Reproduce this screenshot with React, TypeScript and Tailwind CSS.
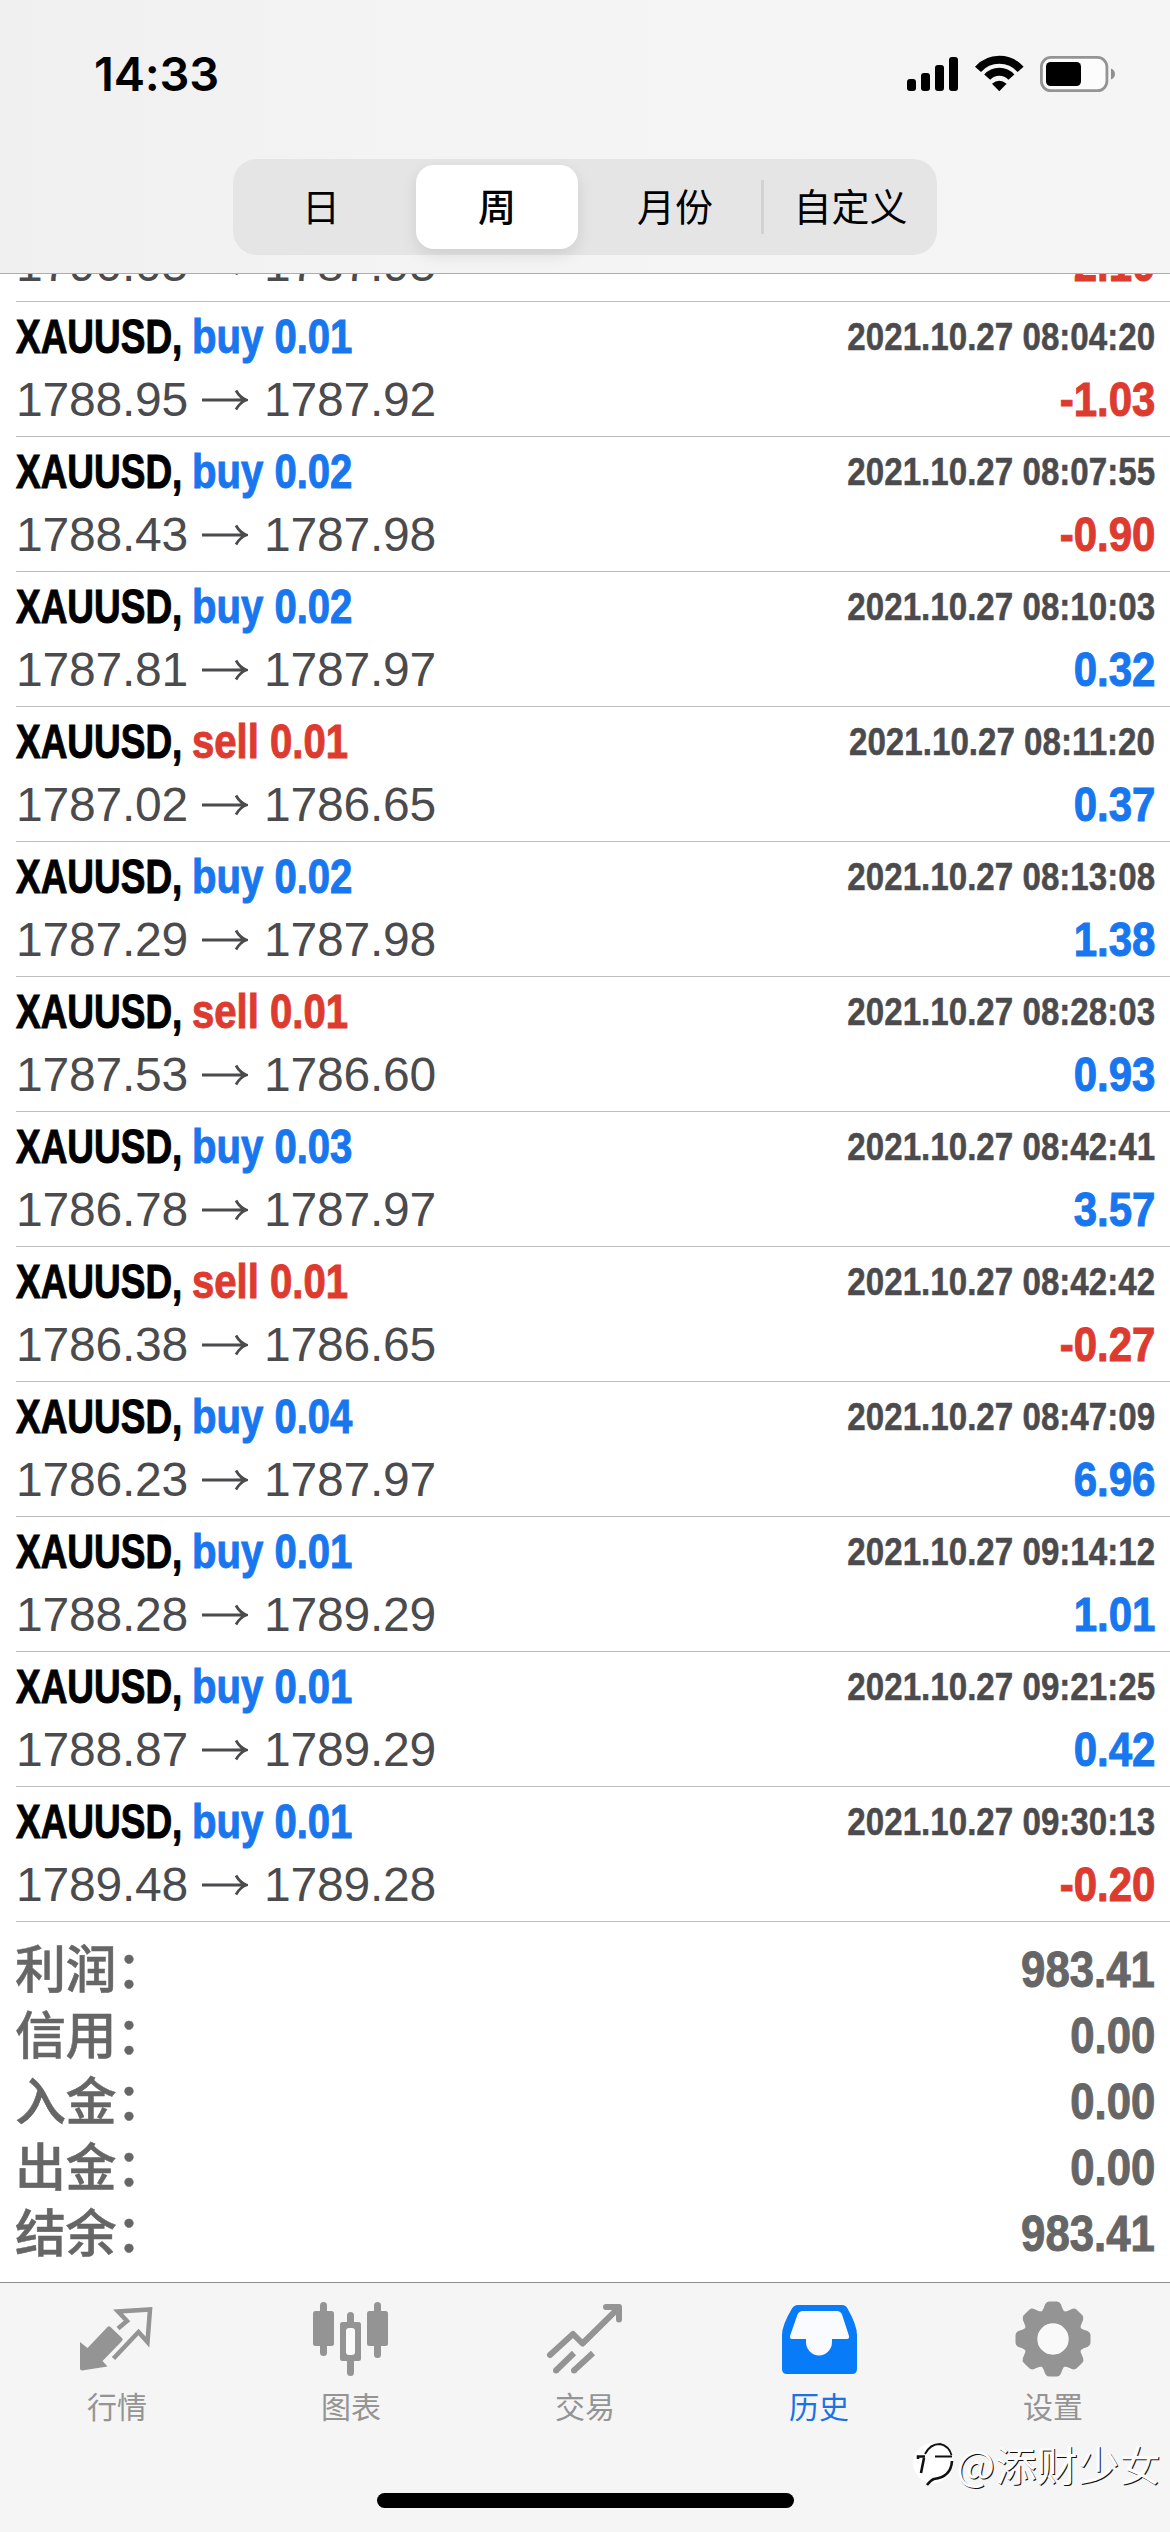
import type { ReactNode } from "react";

type Side = "buy" | "sell";
type Quote = { from: string; to: string; profit: string };
type Deal = Quote & { side: Side; lots: string; time: string };

const scrolledDeal: Quote = { from: "1790.05", to: "1787.95", profit: "-2.10" };

const deals: Deal[] = [
  { side: "buy", lots: "0.01", from: "1788.95", to: "1787.92", time: "2021.10.27 08:04:20", profit: "-1.03" },
  { side: "buy", lots: "0.02", from: "1788.43", to: "1787.98", time: "2021.10.27 08:07:55", profit: "-0.90" },
  { side: "buy", lots: "0.02", from: "1787.81", to: "1787.97", time: "2021.10.27 08:10:03", profit: "0.32" },
  { side: "sell", lots: "0.01", from: "1787.02", to: "1786.65", time: "2021.10.27 08:11:20", profit: "0.37" },
  { side: "buy", lots: "0.02", from: "1787.29", to: "1787.98", time: "2021.10.27 08:13:08", profit: "1.38" },
  { side: "sell", lots: "0.01", from: "1787.53", to: "1786.60", time: "2021.10.27 08:28:03", profit: "0.93" },
  { side: "buy", lots: "0.03", from: "1786.78", to: "1787.97", time: "2021.10.27 08:42:41", profit: "3.57" },
  { side: "sell", lots: "0.01", from: "1786.38", to: "1786.65", time: "2021.10.27 08:42:42", profit: "-0.27" },
  { side: "buy", lots: "0.04", from: "1786.23", to: "1787.97", time: "2021.10.27 08:47:09", profit: "6.96" },
  { side: "buy", lots: "0.01", from: "1788.28", to: "1789.29", time: "2021.10.27 09:14:12", profit: "1.01" },
  { side: "buy", lots: "0.01", from: "1788.87", to: "1789.29", time: "2021.10.27 09:21:25", profit: "0.42" },
  { side: "buy", lots: "0.01", from: "1789.48", to: "1789.28", time: "2021.10.27 09:30:13", profit: "-0.20" },
];

const totals = [
  { label: "利润：", value: "983.41" },
  { label: "信用：", value: "0.00" },
  { label: "入金：", value: "0.00" },
  { label: "出金：", value: "0.00" },
  { label: "结余：", value: "983.41" },
];

function StatusBar() {
  return (
    <div className="flex h-[159px] items-start justify-between pl-[94px] pr-[53px] pt-[42px]">
      <div className="font-['Inter'] text-[47px] font-semibold leading-[64px] tracking-[-0.2px] text-black">14:33</div>
      <svg className="mt-[10px] h-[42px] w-[212px]" viewBox="905 52 212 42">
        <rect x="907" y="79" width="9" height="12" rx="3" />
        <rect x="921" y="73" width="9" height="18" rx="3" />
        <rect x="935" y="65" width="9" height="26" rx="3" />
        <rect x="949" y="57" width="9" height="34" rx="3" />
        <g fill="none" stroke="#000" strokeWidth="8">
          <path d="M978 69.400A28.500 28.500 0 0 1 1020.600 69.400" />
          <path d="M987.200 77.200A16.200 16.200 0 0 1 1011.400 77.200" />
        </g>
        <path d="M992 83.800Q999.300 77.800 1006.600 83.800L999.300 91.200z" />
        <rect x="1041.400" y="57.400" width="65.500" height="33.300" rx="9.500" fill="#fcfcfc" stroke="#949494" strokeWidth="2.800" />
        <rect x="1046" y="62" width="35" height="24" rx="4.500" />
        <path d="M1111 68.500c5.300 1.800 5.300 9.200 0 11z" fill="#8f8f8f" />
      </svg>
    </div>
  );
}

function PeriodTabs() {
  return (
    <div className="mx-auto grid h-[96px] w-[704px] grid-cols-4 rounded-[24px] bg-[#e5e5e6] font-['Noto_Sans_CJK_SC',sans-serif] text-[38px] leading-[91px] text-black">
      <div className="text-center">日</div>
      <div className="px-[7px] py-[6px]">
        <div className="h-[84px] rounded-[18px] bg-white text-center font-medium leading-[79px] shadow-[0_6px_16px_rgba(0,0,0,0.10)]">周</div>
      </div>
      <div className="pl-1 text-center">月份</div>
      <div className="flex">
        <div className="mt-[21px] h-[54px] w-[3px] bg-[#d2d2d4]" />
        <div className="flex-1 text-center">自定义</div>
      </div>
    </div>
  );
}

function Arrow() {
  return (
    <svg className="h-[24px] w-[46px]" viewBox="0 0 46 24" fill="none" stroke="#4b4b4e" strokeWidth="2.800">
      <path d="M0 12H44M34 2.500C36.500 7 40 10.500 44.500 12C40 13.500 36.500 17 34 21.500" />
    </svg>
  );
}

function QuoteLine({ quote }: { quote: Quote }) {
  const gain = quote.profit.startsWith("-") ? "text-[#dd3b30]" : "text-[#1877ee]";
  return (
    <div className="flex h-[64px] shrink-0 items-center justify-between text-[48px] leading-[64px]">
      <div className="flex items-center text-[#4b4b4e]">
        <span className="w-[186px] tracking-[-0.2px]">{quote.from}</span>
        <Arrow />
        <span className="ml-4 tracking-[-0.2px]">{quote.to}</span>
      </div>
      <div className={`origin-right scale-x-[0.875] font-bold [-webkit-text-stroke:1px_currentColor] ${gain}`}>{quote.profit}</div>
    </div>
  );
}

function DealRow({ deal }: { deal: Deal }) {
  const action = deal.side === "buy" ? "text-[#1877ee]" : "text-[#dd3b30]";
  return (
    <div className="ml-4 flex h-[135px] shrink-0 flex-col border-b border-[#bdbdc0] pr-[15px] pt-[5px]">
      <div className="flex h-[61px] items-start justify-between whitespace-nowrap font-bold">
        <div className="flex text-[48px] leading-[60px] [-webkit-text-stroke:1px_currentColor]">
          <div className="w-[176px] origin-left scale-x-[0.77] text-black">XAUUSD,</div>
          <div className={`origin-left scale-x-[0.835] ${action}`}>
            {deal.side} {deal.lots}
          </div>
        </div>
        <div className="origin-right scale-x-[0.85] text-[39px] leading-[59px] text-[#4b4b4e] [-webkit-text-stroke:0.5px_currentColor]">{deal.time}</div>
      </div>
      <QuoteLine quote={deal} />
    </div>
  );
}

function QuotesIcon() {
  return (
    <svg className="h-[80px] w-[80px]" viewBox="77 2300 80 80">
      <path d="M80 2342l7.500 6L107.500 2327q1.500-1.500 3 0L122 2338q1.500 1.500 0 3L102.500 2361l5 5.500L82 2370.500q-2 0-2-2z" fill="#949494" />
      <path d="M118 2328.500l9-7.500l-9-9.500L150 2309.500L147.500 2342l-9-10L113.500 2358.500" fill="none" stroke="#949494" strokeWidth="4.500" />
    </svg>
  );
}

function ChartIcon() {
  return (
    <svg className="h-[80px] w-[80px]" viewBox="311 2300 80 80" fill="#949494">
      <rect x="320" y="2302" width="7" height="54" rx="3.500" />
      <rect x="313" y="2311" width="21" height="35" rx="2.500" />
      <rect x="374" y="2302" width="7" height="56" rx="3.500" />
      <rect x="367" y="2311" width="21" height="35" rx="2.500" />
      <rect x="347" y="2312" width="7" height="64" rx="3.500" />
      <rect x="340" y="2322" width="21" height="39" rx="2.500" />
      <rect x="346" y="2328" width="9" height="27" rx="3" fill="#fafafa" />
    </svg>
  );
}

function TradeIcon() {
  return (
    <svg className="h-[80px] w-[80px]" viewBox="545 2300 80 80" fill="none" stroke="#949494" strokeWidth="6" strokeLinejoin="round">
      <path d="M550 2355L573 2334L582.500 2343.500L618 2308.500" strokeLinecap="round" />
      <path d="M606 2307H619V2319.500" strokeLinecap="round" />
      <path d="M574 2353L556 2370.500M593 2353L574 2370.500" />
      <g fill="#949494" stroke="none">
        <circle cx="556" cy="2370.500" r="3" />
        <circle cx="574" cy="2370.500" r="3" />
      </g>
    </svg>
  );
}

function HistoryIcon() {
  return (
    <svg className="h-[80px] w-[80px]" viewBox="778 2300 80 80">
      <path d="M797 2305H841q4 0 5.500 3.500Q856 2325 856 2335V2369q0 5-5 5H786q-5 0-5-5V2335Q781 2325 791 2308.500q2-3.500 6-3.500z" fill="#087cf8" />
      <path d="M802 2311H836q3.500 0 5 3.500L848 2336q.500 3-2 3H831V2342a12.500 13 0 0 1-26 0V2339H791q-2.500 0-2-3L796.500 2314.500q1.500-3.500 5.500-3.500z" fill="#f9fbfe" />
    </svg>
  );
}

function SettingsIcon() {
  const angles = [0, 45, 90, 135, 180, 225, 270, 315];
  return (
    <svg className="h-[80px] w-[80px]" viewBox="-40 -39 80 80" fill="#949494">
      {angles.map((a) => (
        <path key={a} transform={`rotate(${a})`} d="M-13 -26Q-10 -28 -8.500 -33L-8 -34.500Q-6.500 -37.500 -4 -37.500H4Q6.500 -37.500 8 -34.500L8.500 -33Q10 -28 13 -26L8 -15H-8z" />
      ))}
      <circle r="22" fill="none" stroke="#949494" strokeWidth="13" />
      <circle r="15.700" fill="#f9f9f9" />
    </svg>
  );
}

function TabItem({ icon, label, active = false }: { icon: ReactNode; label: string; active?: boolean }) {
  return (
    <div className={`flex flex-col items-center pt-[17px] font-['Noto_Sans_CJK_SC',sans-serif] text-[30px] leading-[40px] ${active ? "text-[#1b72e6]" : "text-[#949494]"}`}>
      {icon}
      <span className="mt-[5px]">{label}</span>
    </div>
  );
}

function Watermark() {
  return (
    <div className="absolute bottom-[43px] right-[9px] flex items-center">
      <svg className="h-[52px] w-[44px]" viewBox="910 2444 44 52" fill="none" stroke="#111">
        <circle cx="931" cy="2470" r="20" fill="#fff" stroke="none" />
        <path strokeWidth="1.800" d="M923 2461Q928 2451 938 2451Q947 2453 949.500 2462M933 2463.500H950" />
        <path strokeWidth="2.600" d="M916 2466V2463.500H923M922 2465L919 2480M950 2468Q949 2484 932 2486Q929 2487 925 2492" />
      </svg>
      <div className="font-['Noto_Sans_CJK_SC',sans-serif] text-[41px] leading-[52px] tracking-[0.4px] text-[#fdfdfd] [text-shadow:1px_1px_0.5px_#111]">@添财少女</div>
    </div>
  );
}

export default function App() {
  return (
    <div className="relative flex h-[2532px] w-[1170px] flex-col overflow-hidden bg-white font-['Liberation_Sans','Noto_Sans_CJK_SC',sans-serif]">
      <header className="h-[274px] shrink-0 border-b border-[#adadaf] bg-linear-to-r from-[#f0f0f0] via-[#f4f4f5] via-40% to-[#f5f5f6]">
        <StatusBar />
        <PeriodTabs />
      </header>
      <main className="flex h-[2008px] shrink-0 flex-col">
        <div className="ml-4 flex h-[28px] shrink-0 flex-col justify-end overflow-hidden border-b border-[#bdbdc0] pb-[4px] pr-[15px]">
          <QuoteLine quote={scrolledDeal} />
        </div>
        {deals.map((deal) => (
          <DealRow key={deal.time} deal={deal} />
        ))}
        <div className="flex flex-col pl-[15px] pr-4 pt-[15px] text-[#666]">
          {totals.map((row) => (
            <div key={row.label} className="flex h-[66px] items-start justify-between">
              <span className="whitespace-nowrap font-['Noto_Sans_CJK_SC',sans-serif] text-[51px] font-medium leading-[59px] tracking-[-0.4px] [-webkit-text-stroke:0.5px_currentColor]">
                {row.label}
              </span>
              <span className="-mr-px origin-right scale-x-[0.875] text-[50px] font-bold leading-[67px] [-webkit-text-stroke:1px_currentColor]">{row.value}</span>
            </div>
          ))}
        </div>
      </main>
      <nav className="grid h-[250px] shrink-0 grid-cols-5 border-t border-[#8e8e90] bg-[#f5f5f5]">
        <TabItem icon={<QuotesIcon />} label="行情" />
        <TabItem icon={<ChartIcon />} label="图表" />
        <TabItem icon={<TradeIcon />} label="交易" />
        <TabItem icon={<HistoryIcon />} label="历史" active />
        <TabItem icon={<SettingsIcon />} label="设置" />
      </nav>
      <Watermark />
      <div className="absolute bottom-[24px] left-[377px] h-[15px] w-[417px] rounded-full bg-black" />
    </div>
  );
}
